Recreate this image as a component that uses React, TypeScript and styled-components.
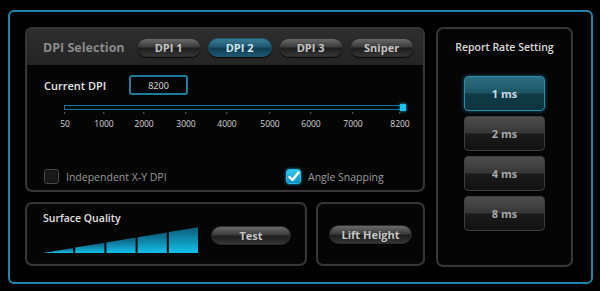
import React from 'react';
import styled, { createGlobalStyle } from 'styled-components';

const GlobalStyle = createGlobalStyle`
  html, body {
    margin: 0;
    padding: 0;
    background: #000;
  }
  body {
    font-family: 'Open Sans', 'Liberation Sans', sans-serif;
    color: #d8d8d8;
  }
`;

const Frame = styled.div`
  box-sizing: border-box;
  margin: 10px 0 0 8px;
  width: 585px;
  height: 274px;
  border: 2px solid #1d86aa;
  border-radius: 6px;
  padding: 15px 18px 15px 15px;
  display: grid;
  grid-template-columns: 400px 137px;
  column-gap: 11px;
`;

const LeftCol = styled.div`
  display: grid;
  grid-template-rows: 165px 64px;
  row-gap: 10px;
`;

const Panel = styled.div`
  box-sizing: border-box;
  border: 2px solid #363636;
  border-radius: 7px;
  background: #050505;
  box-shadow: inset 0 0 2px #1a1a1a;
  overflow: hidden;
`;

const DpiPanel = styled(Panel)`
  display: flex;
  flex-direction: column;
`;

const Header = styled.div`
  height: 36px;
  background: linear-gradient(#2e2e2e, #242424);
  display: flex;
  align-items: center;
  padding-left: 16px;
  gap: 7px;
`;

const HeaderTitle = styled.div`
  font-size: 12.5px;
  font-weight: 700;
  color: #8a8a8a;
  margin-right: 5px;
  white-space: nowrap;
`;

const Pill = styled.div<{ $active?: boolean; $w?: number }>`
  box-sizing: border-box;
  width: ${p => p.$w || 64}px;
  height: 19px;
  border-radius: 10px;
  display: flex;
  align-items: center;
  justify-content: center;
  font-size: 11px;
  font-weight: 700;
  color: ${p => (p.$active ? '#d0e4ec' : '#c4c4c4')};
  background: ${p =>
    p.$active
      ? 'linear-gradient(#3b7a94 0%, #1f5a72 45%, #103c50 55%, #1c5870 100%)'
      : 'linear-gradient(#6a6a6a 0%, #3c3c3c 45%, #1e1e1e 55%, #353535 100%)'};
  border: 1px solid ${p => (p.$active ? '#1e5670' : '#2c2c2c')};
  box-shadow: 0 1px 1px rgba(0, 0, 0, 0.8);
`;

const DpiBody = styled.div`
  padding: 10px 19px 0 17px;
  flex: 1;
  display: flex;
  flex-direction: column;
`;

const DpiRow = styled.div`
  display: flex;
  align-items: center;
  height: 20px;
`;

const Label = styled.div`
  font-size: 11px;
  font-weight: 600;
  color: #e6e6e6;
  width: 85px;
`;

const ValueBox = styled.div`
  box-sizing: border-box;
  width: 59px;
  height: 20px;
  border: 2px solid #1d7e9e;
  border-radius: 3px;
  display: flex;
  align-items: center;
  justify-content: center;
  font-size: 9px;
  color: #e0e0e0;
`;

const SliderWrap = styled.div`
  margin: 10px 0 0 20px;
  width: 340px;
  position: relative;
`;

const Track = styled.div`
  box-sizing: border-box;
  height: 5px;
  border: 1px solid #1b7595;
  background: #020a0e;
`;

const Handle = styled.div`
  position: absolute;
  right: -2px;
  top: -1px;
  width: 6px;
  height: 7px;
  background: #1cc4ee;
  box-shadow: 0 0 3px #1cc4ee;
`;

const Ticks = styled.div`
  position: relative;
  height: 18px;
`;

const Tick = styled.div`
  position: absolute;
  top: 2px;
  transform: translateX(-50%);
  display: flex;
  flex-direction: column;
  align-items: center;
  font-size: 8.5px;
  color: #d6d6d6;

  &::before {
    content: '';
    width: 1px;
    height: 2px;
    background: #666;
    margin-bottom: 4px;
  }
`;

const OptionsRow = styled.div`
  margin-top: auto;
  margin-bottom: 6px;
  display: flex;
  align-items: center;
`;

const Option = styled.div<{ $w?: number }>`
  display: flex;
  align-items: center;
  gap: 7px;
  width: ${p => (p.$w ? `${p.$w}px` : 'auto')};
  font-size: 10.5px;
  color: #9a9a9a;
`;

const Box = styled.div<{ $checked?: boolean }>`
  box-sizing: border-box;
  width: 15px;
  height: 15px;
  border-radius: 3px;
  display: flex;
  align-items: center;
  justify-content: center;
  background: ${p => (p.$checked ? 'linear-gradient(#35c8ef, #0f8fbf)' : '#1a1a1a')};
  border: 1px solid ${p => (p.$checked ? '#2ab6e0' : '#4a4a4a')};
  box-shadow: ${p => (p.$checked ? '0 0 3px #1aa8d8' : 'inset 0 0 2px #000')};
`;

const BottomRow = styled.div`
  display: grid;
  grid-template-columns: 282px 109px;
  column-gap: 9px;
`;

const SurfacePanel = styled(Panel)`
  padding: 7px 14px 0 16px;
`;

const SmallTitle = styled.div`
  font-size: 10.5px;
  font-weight: 600;
  color: #e0e0e0;
`;

const SurfaceRow = styled.div`
  display: flex;
  align-items: flex-start;
  gap: 12px;
  margin-top: 2px;
`;

const TestWrap = styled.div`
  margin-top: -1px;
`;

const LiftPanel = styled(Panel)`
  display: flex;
  align-items: center;
  justify-content: center;
`;

const ReportPanel = styled(Panel)`
  display: flex;
  flex-direction: column;
  align-items: center;
  padding-top: 11px;
`;

const ReportTitle = styled.div`
  font-size: 10.5px;
  font-weight: 600;
  color: #dcdcdc;
  margin-bottom: 22px;
`;

const RateList = styled.div`
  display: flex;
  flex-direction: column;
  gap: 5px;
`;

const RateButton = styled.div<{ $active?: boolean }>`
  box-sizing: border-box;
  width: 81px;
  height: 35px;
  border-radius: 4px;
  display: flex;
  align-items: center;
  justify-content: center;
  font-size: 11px;
  font-weight: 700;
  color: ${p => (p.$active ? '#c8dce4' : '#a8a8a8')};
  background: ${p =>
    p.$active
      ? 'linear-gradient(#2c6e82 0%, #1c5564 48%, #0f3a46 52%, #0d3540 100%)'
      : 'linear-gradient(#4e4e4e 0%, #363636 48%, #1a1a1a 52%, #121212 100%)'};
  border: 1px solid ${p => (p.$active ? '#2a8cab' : '#3e3e3e')};
  box-shadow: ${p => (p.$active ? '0 0 4px rgba(40,150,190,0.6)' : '0 1px 1px #000')};
`;

const ticks = [
  { v: '50', x: 1 },
  { v: '1000', x: 40 },
  { v: '2000', x: 80 },
  { v: '3000', x: 122 },
  { v: '4000', x: 163 },
  { v: '5000', x: 206 },
  { v: '6000', x: 247 },
  { v: '7000', x: 289 },
  { v: '8200', x: 336 },
];

function Check() {
  return (
    <svg width="12" height="11" viewBox="0 0 12 11">
      <path d="M1.5 6 L4.5 9 L10.5 1.5" fill="none" stroke="#fff" strokeWidth="2.4" strokeLinecap="round" strokeLinejoin="round" />
    </svg>
  );
}

function QualityBars() {
  // five segments of a rising wedge, 157 wide, 26 tall
  const w = 157;
  const h = 26;
  const seg = w / 5;
  const top = (x: number) => h - (h * x) / w;
  const parts = [];
  for (let i = 0; i < 5; i++) {
    const x0 = i * seg + (i ? 1 : 0);
    const x1 = (i + 1) * seg - 1;
    parts.push(
      <polygon
        key={i}
        points={`${x0},${h} ${x0},${top(x0)} ${x1},${top(x1)} ${x1},${h}`}
        fill="url(#qg)"
      />
    );
  }
  return (
    <svg width={w} height={h} viewBox={`0 0 ${w} ${h}`}>
      <defs>
        <linearGradient id="qg" x1="0" y1="0" x2="0" y2="1">
          <stop offset="0" stopColor="#0c5a78" />
          <stop offset="1" stopColor="#12c0ea" />
        </linearGradient>
      </defs>
      {parts}
    </svg>
  );
}

export default function App() {
  return (
    <>
      <GlobalStyle />
      <Frame>
        <LeftCol>
          <DpiPanel>
            <Header>
              <HeaderTitle>DPI Selection</HeaderTitle>
              <Pill>DPI 1</Pill>
              <Pill $active>DPI 2</Pill>
              <Pill>DPI 3</Pill>
              <Pill>Sniper</Pill>
            </Header>
            <DpiBody>
              <DpiRow>
                <Label>Current DPI</Label>
                <ValueBox>8200</ValueBox>
              </DpiRow>
              <SliderWrap>
                <Track />
                <Handle />
                <Ticks>
                  {ticks.map(t => (
                    <Tick key={t.v} style={{ left: t.x }}>
                      {t.v}
                    </Tick>
                  ))}
                </Ticks>
              </SliderWrap>
              <OptionsRow>
                <Option $w={242}>
                  <Box />
                  Independent X-Y DPI
                </Option>
                <Option>
                  <Box $checked>
                    <Check />
                  </Box>
                  Angle Snapping
                </Option>
              </OptionsRow>
            </DpiBody>
          </DpiPanel>
          <BottomRow>
            <SurfacePanel>
              <SmallTitle>Surface Quality</SmallTitle>
              <SurfaceRow>
                <QualityBars />
                <TestWrap>
                  <Pill $w={80}>Test</Pill>
                </TestWrap>
              </SurfaceRow>
            </SurfacePanel>
            <LiftPanel>
              <Pill $w={83}>Lift Height</Pill>
            </LiftPanel>
          </BottomRow>
        </LeftCol>
        <ReportPanel>
          <ReportTitle>Report Rate Setting</ReportTitle>
          <RateList>
            <RateButton $active>1 ms</RateButton>
            <RateButton>2 ms</RateButton>
            <RateButton>4 ms</RateButton>
            <RateButton>8 ms</RateButton>
          </RateList>
        </ReportPanel>
      </Frame>
    </>
  );
}
